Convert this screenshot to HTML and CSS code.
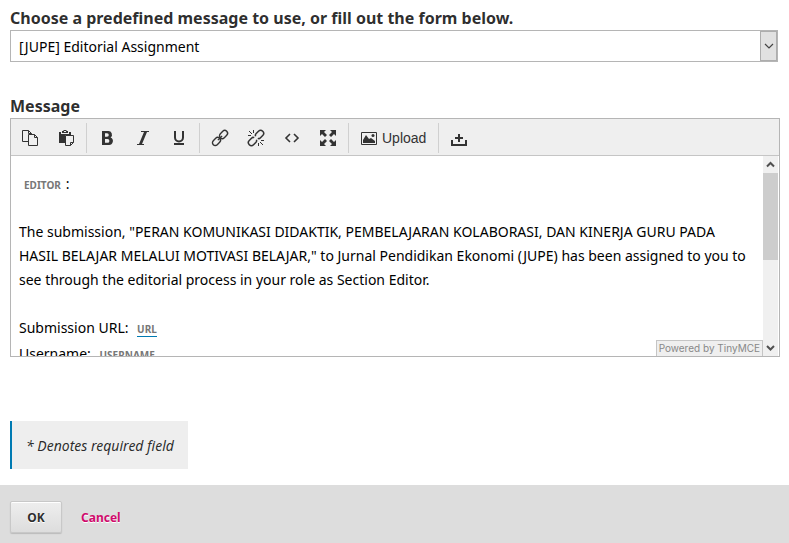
FILE: index.html
```
<!DOCTYPE html>
<html lang="en">
<head>
  <meta charset="UTF-8">
  <meta name="viewport" content="width=device-width, initial-scale=1.0">
  <title>Editorial Assignment</title>
  <link rel="stylesheet" href="styles.css">
</head>
<body>

<form class="message-form">
  <div class="fields">
    <div class="field">
      <label class="label" for="template">Choose a predefined message to use, or fill out the form below.</label>
      <div class="select-wrap">
        <select id="template">
          <option>[JUPE] Editorial Assignment</option>
        </select>
        <span class="select-arrow">
          <svg width="10" height="6" viewBox="0 0 10 6"><path d="M1 1l4 4 4-4" fill="none" stroke="#444" stroke-width="1.2"/></svg>
        </span>
      </div>
    </div>

    <div class="field">
      <span class="label" id="message-label">Message</span>
      <div class="editor">
        <div class="toolbar">
          <div class="group">
            <button type="button" class="tool" aria-label="Copy">
              <svg viewBox="0 0 16 16"><path d="M6 11.5H.5V.5h6l3 3V5M6.500 .5v3h3M6.500 4.500h6l3 3v8h-9zM12.500 4.500v3h3" fill="none" stroke="#333"/></svg>
            </button>
            <button type="button" class="tool" aria-label="Paste">
              <svg viewBox="0 0 16 16"><path d="M1 2h2v2h8V2h2v3H7v8H1z" fill="#333"/><path d="M1 4h12v1.500H7V13H1z" fill="#333"/><path d="M4 3V1h1.500V0h3v1H10v2z" fill="#333"/><path d="M6 1h2v1H6z" fill="#efefef"/><path d="M7.500 5.500h8v7l-3 3h-5zM12.500 15.500v-3h3" fill="#efefef" stroke="#333"/></svg>
            </button>
          </div>
          <div class="group">
            <button type="button" class="tool" aria-label="Bold">
              <svg viewBox="0 0 16 16"><path d="M3 1h6a3.600 3.600 0 0 1 2.600 6.400A4 4 0 0 1 9.500 15H3zM6 3.200v3.600h2a1.800 1.800 0 0 0 0-3.600zM6 9v3.800h2.500a1.900 1.900 0 0 0 0-3.800z" fill="#333" fill-rule="evenodd"/></svg>
            </button>
            <button type="button" class="tool" aria-label="Italic">
              <svg viewBox="0 0 16 16"><path d="M6 1h8v1h-2L7 14h2v1H2v-1h2L9 2H6z" fill="#333"/></svg>
            </button>
            <button type="button" class="tool" aria-label="Underline">
              <svg viewBox="0 0 16 16"><path d="M4 1v6.500a4 4 0 0 0 8 0V1" fill="none" stroke="#333" stroke-width="2"/><path d="M3 13h10v2H3z" fill="#333"/></svg>
            </button>
          </div>
          <div class="group">
            <button type="button" class="tool" aria-label="Insert link">
              <svg viewBox="0 0 16 16"><g fill="none" stroke="#333" stroke-width="1.400" transform="rotate(-45 8 8)"><rect x="-1.500" y="5.200" width="9" height="5.600" rx="2.800"/><rect x="8.500" y="5.200" width="9" height="5.600" rx="2.800"/><path d="M5 8h6"/></g></svg>
            </button>
            <button type="button" class="tool" aria-label="Remove link">
              <svg viewBox="0 0 16 16"><g fill="none" stroke="#333" stroke-width="1.500"><g transform="rotate(-45 8 8)"><path d="M7 6.500Q6.500 5 5 5H1.500a3 3 0 0 0 0 6H5Q6.500 11 7 9.500M9 6.500Q9.500 5 11 5h3.500a3 3 0 0 1 0 6H11Q9.500 11 9 9.500"/></g><path d="M5.500 0v3M1 1l3 3M0 5.500h3M10.500 13v3M12 12l3 3M13 10.500h3" stroke-width="1"/></g></svg>
            </button>
            <button type="button" class="tool" aria-label="Source code">
              <svg viewBox="0 0 16 16"><path d="M6 4L2 8l4 4M10 4l4 4-4 4" fill="none" stroke="#333" stroke-width="1.600"/></svg>
            </button>
            <button type="button" class="tool" aria-label="Fullscreen">
              <svg viewBox="0 0 16 16"><path d="M0 0h6L4 2l3 3-2 2-3-3-2 2zM16 0v6l-2-2-3 3-2-2 3-3-2-2zM0 16v-6l2 2 3-3 2 2-3 3 2 2zM16 16h-6l2-2-3-3 2-2 3 3 2-2z" fill="#333"/></svg>
            </button>
          </div>
          <div class="group">
            <button type="button" class="tool tool-text">
              <svg viewBox="0 0 16 16"><path d="M.5 2.500h15v12H.5z" fill="none" stroke="#333"/><path d="M2 13V10l3-5 3 4 2-1 4 3v2z" fill="#333"/><circle cx="12" cy="5.500" r="1.500" fill="#333"/></svg>
              Upload
            </button>
          </div>
          <div class="group">
            <button type="button" class="tool" aria-label="Insert content">
              <svg viewBox="0 0 16 16"><path d="M7 4h2v3h3v2H9v3H7V9H4V7h3zM0 10h2v4h12v-4h2v6H0z" fill="#333"/></svg>
            </button>
          </div>
        </div>

        <div class="edit-area">
          <div class="content" role="textbox" aria-multiline="true" aria-labelledby="message-label" contenteditable="true" spellcheck="false">
            <p><span class="tag">Editor</span>:</p>
            <p>The submission, "PERAN KOMUNIKASI DIDAKTIK, PEMBELAJARAN KOLABORASI, DAN KINERJA GURU PADA HASIL BELAJAR MELALUI MOTIVASI BELAJAR," to Jurnal Pendidikan Ekonomi (JUPE) has been assigned to you to see through the editorial process in your role as Section Editor.</p>
            <div class="line">Submission URL: <span class="tag"><a href="#">URL</a></span></div>
            <div class="line">Username: <span class="tag">Username</span></div>
          </div>
          <div class="scrollbar">
            <svg width="15" height="17" viewBox="0 0 15 17"><path d="M4 10.500L7.500 7l3.500 3.500" fill="none" stroke="#505050" stroke-width="2"/></svg>
            <div class="track"><div class="thumb"></div></div>
            <svg width="15" height="17" viewBox="0 0 15 17"><path d="M4 7l3.500 3.500L11 7" fill="none" stroke="#505050" stroke-width="2"/></svg>
          </div>
          <div class="powered">Powered by TinyMCE</div>
        </div>
      </div>
    </div>

    <p class="required">* Denotes required field</p>
  </div>

  <div class="buttons">
    <button type="submit" class="ok">OK</button>
    <a href="#" class="cancel">Cancel</a>
  </div>
</form>

</body>
</html>
```
FILE: styles.css
```
* {
  box-sizing: border-box;
}

body {
  margin: 0;
  background: #fff;
  color: rgba(0, 0, 0, 0.84);
  font-family: "Noto Sans", "Open Sans", sans-serif;
  font-size: 14px;
  line-height: 24px;
}

.fields {
  padding: 6px 9px 16px 10px;
}

.field {
  margin-bottom: 32px;
}

.label {
  display: block;
  font-size: 16px;
  font-weight: 700;
}

/* Template select */
.select-wrap {
  position: relative;
  margin-right: 2px;
}

select {
  display: block;
  width: 100%;
  height: 32px;
  padding: 2px 28px 0 8px;
  border: 1px solid #b5b5b5;
  border-radius: 0;
  background: #fff;
  color: #000;
  font: inherit;
  appearance: none;
}

.select-arrow {
  position: absolute;
  top: 1px;
  right: 1px;
  bottom: 1px;
  width: 17px;
  display: flex;
  align-items: center;
  justify-content: center;
  border: 1px solid #adadad;
  background: #e1e1e1;
  pointer-events: none;
}

/* Editor */
.editor {
  border: 1px solid #b5b5b5;
}

.toolbar {
  display: flex;
  flex-wrap: wrap;
  padding: 4px 0 2px;
  border-bottom: 1px solid #c5c5c5;
  background: #efefef;
}

.group {
  display: flex;
  padding: 0 2px;
}

.group:first-child {
  padding-left: 1px;
}

.group + .group {
  border-left: 1px solid #d0d0d0;
}

.tool {
  display: flex;
  align-items: center;
  justify-content: center;
  width: 36px;
  height: 30px;
  padding: 0;
  border: 0;
  background: none;
  color: #333;
  font-family: "Liberation Sans", Arial, sans-serif;
  font-size: 14px;
}

.tool svg {
  width: 16px;
  height: 16px;
  overflow: visible;
}

.tool-text {
  width: auto;
  padding: 0 10px;
  gap: 5px;
}

.edit-area {
  position: relative;
  display: flex;
  height: 200px;
  padding-right: 1px;
}

.content {
  flex: 1;
  padding: 16px 8px 0;
  overflow: hidden;
  color: #000;
  outline: none;
}

.content p {
  margin: 0 0 24px;
}

.line {
  margin-bottom: 2px;
}

.tag {
  margin: 0 5px;
  color: #777;
  font-size: 10px;
  font-weight: 700;
  line-height: 16px;
  text-transform: uppercase;
}

.tag a {
  color: inherit;
  text-decoration: none;
  border-bottom: 1px solid #007ab2;
}

.scrollbar {
  display: flex;
  flex-direction: column;
  width: 15px;
  background: #f0f0f0;
}

.track {
  flex: 1;
}

.thumb {
  height: 87px;
  background: #cdcdcd;
}

.powered {
  position: absolute;
  right: 16px;
  bottom: 0;
  padding: 0 2px;
  border: 1px solid #c5c5c5;
  border-bottom: 0;
  background: #efefef;
  color: #888;
  font-family: Inter, sans-serif;
  font-size: 10px;
  line-height: 15px;
}

.required {
  display: inline-block;
  margin: 32px 0 0;
  padding: 13px 14px 11px;
  border-left: 2px solid #007ab2;
  background: #eee;
  font-style: italic;
}

/* Form buttons */
.buttons {
  display: flex;
  align-items: center;
  gap: 19px;
  padding: 16px 10px 10px;
  background: #ddd;
  font-size: 12px;
  font-weight: 700;
}

.ok {
  width: 52px;
  height: 32px;
  padding: 2px 0 0;
  border: 1px solid #c8c8c8;
  border-radius: 2px;
  background: linear-gradient(#eee, #ddd);
  box-shadow: 0 1px 1px #bbb, inset 0 1px 0 #fff;
  color: rgba(0, 0, 0, 0.84);
  font: inherit;
  text-shadow: 0 1px 0 #fff;
}

.cancel {
  padding-top: 2px;
  color: #d00a6c;
  text-decoration: none;
  text-shadow: 0 1px 0 #fff;
}
```
